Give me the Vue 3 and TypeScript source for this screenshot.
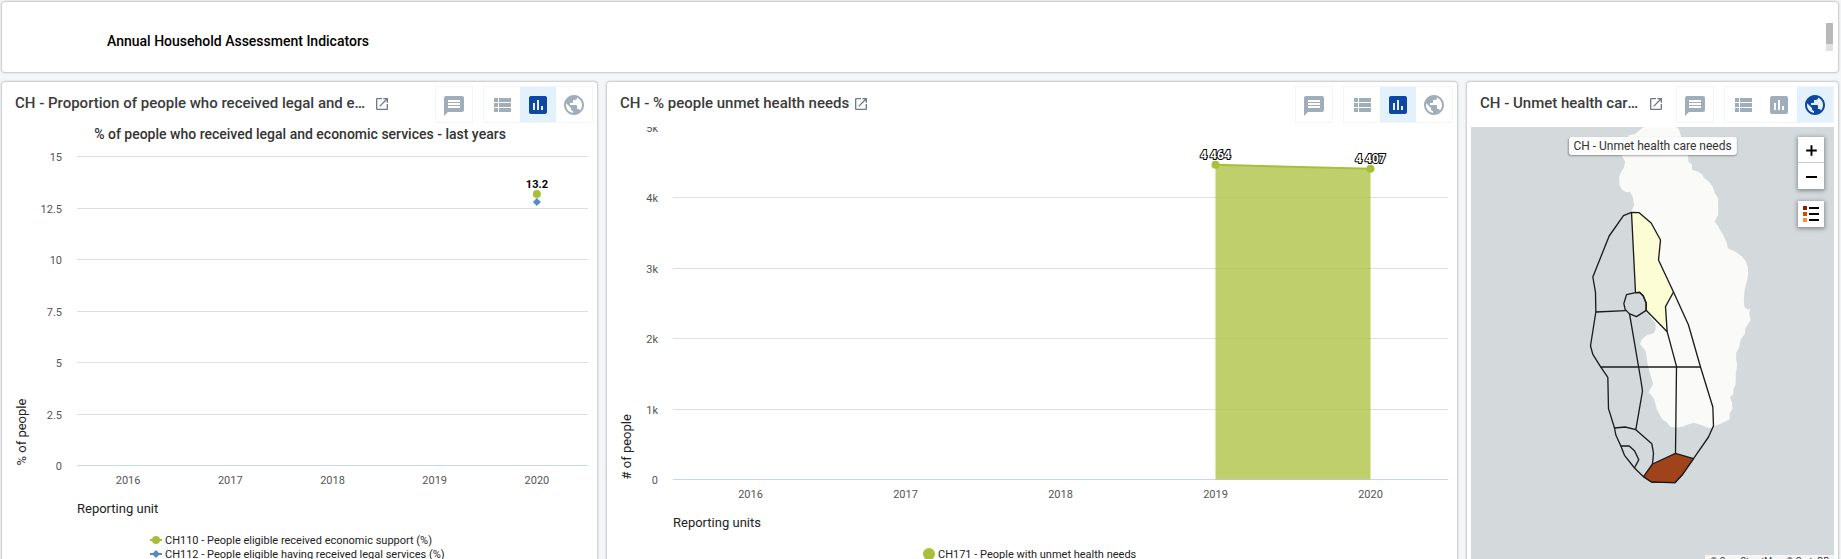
<script setup lang="ts">
import { computed, onBeforeUnmount, onMounted, ref } from 'vue'

type View = 'table' | 'chart' | 'map'

interface Series {
  name: string
  color: string
  marker: 'dot' | 'line-dot' | 'line-diamond'
}

interface Chart {
  title?: string
  left: number
  top: number
  step: number
  ticks: string[]
  xTitle: string
  yTitle: string
  legendX: number
  legendY: number
  legend: Series[]
}

interface Card {
  id: string
  title: string
  view: View
  roomy?: boolean
  chart?: Chart
}

const years = ['2016', '2017', '2018', '2019', '2020']
const green = '#a8bf3a'
const blue = '#558cc0'
const rightPad = 5

const cards: Card[] = [
  {
    id: 'legal',
    title: 'CH - Proportion of people who received legal and economic services',
    view: 'chart',
    roomy: true,
    chart: {
      title: '% of people who received legal and economic services - last years',
      left: 71,
      top: 29.5,
      step: 51.5,
      ticks: ['15', '12.5', '10', '7.5', '5', '2.5', '0'],
      xTitle: 'Reporting unit',
      yTitle: '% of people',
      legendX: -149,
      legendY: 413,
      legend: [
        { name: 'CH110 - People eligible received economic support (%)', color: green, marker: 'line-dot' },
        { name: 'CH112 - People eligible having received legal services (%)', color: blue, marker: 'line-diamond' },
      ],
    },
  },
  {
    id: 'health',
    title: 'CH - % people unmet health needs',
    view: 'chart',
    chart: {
      left: 62,
      top: 0,
      step: 70.5,
      ticks: ['5k', '4k', '3k', '2k', '1k', '0'],
      xTitle: 'Reporting units',
      yTitle: '# of people',
      legendX: -108,
      legendY: 427,
      legend: [{ name: 'CH171 - People with unmet health needs', color: green, marker: 'dot' }],
    },
  },
  { id: 'map', title: 'CH - Unmet health care needs', view: 'map' },
]

const views: { id: View; label: string; path: string }[] = [
  {
    id: 'table',
    label: 'View as table',
    path: 'M4 14h4v-4H4v4zm0 5h4v-4H4v4zM4 9h4V5H4v4zm5 5h12v-4H9v4zm0 5h12v-4H9v4zM9 5v4h12V5H9z',
  },
  {
    id: 'chart',
    label: 'View as chart',
    path: 'M19 3H5c-1.1 0-2 .9-2 2v14c0 1.1.9 2 2 2h14c1.100 0 2-.9 2-2V5c0-1.100-.9-2-2-2zM9 17H7v-7h2v7zm4 0h-2V7h2v10zm4 0h-2v-4h2v4z',
  },
  {
    id: 'map',
    label: 'View as map',
    path: 'M12 2C6.480 2 2 6.480 2 12s4.480 10 10 10 10-4.480 10-10S17.520 2 12 2zm-1 17.930c-3.950-.490-7-3.850-7-7.930 0-.620.080-1.210.210-1.790L9 15v1c0 1.100.900 2 2 2v1.930zm6.900-2.540c-.260-.810-1-1.390-1.900-1.390h-1v-3c0-.550-.450-1-1-1H8v-2h2c.550 0 1-.450 1-1V7h2c1.100 0 2-.900 2-2v-.410c2.930 1.190 5 4.060 5 7.410 0 2.080-.800 3.970-2.100 5.390z',
  },
]

const widths = ref<Record<string, number>>({ legal: 587, health: 842 })
const chartEls: Record<string, HTMLElement> = {}
const keep = (id: string) => (el: unknown) => {
  if (el) chartEls[id] = el as HTMLElement
}

let observer: ResizeObserver | undefined
const measure = () => {
  for (const id of Object.keys(chartEls)) {
    const w = Math.round(chartEls[id].clientWidth)
    if (widths.value[id] !== w) widths.value[id] = w
  }
}
onMounted(() => {
  measure()
  observer = new ResizeObserver(measure)
  Object.values(chartEls).forEach((el) => observer!.observe(el))
})
onBeforeUnmount(() => observer?.disconnect())

const right = (c: Card) => widths.value[c.id] - rightPad
const lineY = (c: Chart, i: number) => Math.floor(c.top + i * c.step) + 0.5
const baseY = (c: Chart) => lineY(c, c.ticks.length - 1)
const yearX = (c: Card, i: number) => c.chart!.left + ((right(c) - c.chart!.left) * (i + 0.5)) / years.length
const legendStart = (c: Card) => Math.round(widths.value[c.id] / 2) + c.chart!.legendX

const area = computed(() => {
  const card = cards[1]
  const base = baseY(card.chart!)
  const perUnit = card.chart!.step / 1000
  return {
    base,
    points: [
      { x: yearX(card, 3), y: base - 4464 * perUnit, label: '4 464' },
      { x: yearX(card, 4), y: base - 4407 * perUnit, label: '4 407' },
    ],
  }
})
const areaPath = computed(() => {
  const [a, b] = area.value.points
  return `M${a.x} ${area.value.base}V${a.y}L${b.x} ${b.y}V${area.value.base}Z`
})
const areaLine = computed(() => {
  const [a, b] = area.value.points
  return `M${a.x} ${a.y}L${b.x} ${b.y}`
})

const borders = [
  'M483 256 459 266 416 327 367 450 375 496 376 555 360 657 367 682 390 719 412 751 414 845 432 903 436 924 451 957 462 985 492 1023 519 1049 543 1065 613 1067 634 1045 669 995 714 930 729 896 727 840 690 720 654 594 609 495',
  'M376 555 466 551',
  'M390 720H690',
  'M477 560 511 759 516 792 496 908',
  'M590 614 618 718 615 979',
  'M432 903 464 900 496 908 544 950 549 979 546 1011',
  'M451 957H476L492 971 505 998 492 1023',
  'M468 503 495 497 507 496 518 506 527 528V550L498 569 476 560 464 547 460 530Z',
]
</script>

<template>
  <main class="page">
    <section class="card banner">
      <h1 class="banner-text">Annual Household Assessment Indicators</h1>
      <div class="scrollbar" aria-hidden="true"><div class="thumb"></div></div>
    </section>

    <div class="board">
      <section v-for="card in cards" :key="card.id" class="card item">
        <header class="header">
          <div class="heading" :class="{ roomy: card.roomy }">
            <h2 class="title">{{ card.title }}</h2>
            <a class="launch" href="#" aria-label="Open in app">
              <svg viewBox="0 0 24 24" width="16" height="16">
                <path d="M19 19H5V5h7V3H5c-1.110 0-2 .9-2 2v14c0 1.100.89 2 2 2h14c1.100 0 2-.9 2-2v-7h-2v7zM14 3v2h3.590l-9.830 9.830 1.410 1.410L19 6.410V10h2V3h-7z" />
              </svg>
            </a>
          </div>
          <div class="group">
            <button type="button" class="tool comment" aria-label="Show details and interpretations">
              <svg viewBox="0 0 24 24" width="24" height="24">
                <path d="M20 2H4c-1.100 0-1.990.9-1.990 2L2 22l4-4h14c1.100 0 2-.9 2-2V4c0-1.100-.9-2-2-2zm-2 12H6v-2h12v2zm0-3H6V9h12v2zm0-3H6V6h12v2z" />
              </svg>
            </button>
          </div>
          <div class="group">
            <button
              v-for="v in views"
              :key="v.id"
              type="button"
              class="tool"
              :class="{ active: v.id === card.view }"
              :aria-label="v.label"
              :aria-pressed="v.id === card.view"
            >
              <svg viewBox="0 0 24 24" width="24" height="24"><path :d="v.path" /></svg>
            </button>
          </div>
        </header>

        <div v-if="card.chart" class="content" :ref="keep(card.id)">
          <svg class="chart" :width="widths[card.id]" height="448">
            <text v-if="card.chart.title" class="chart-title" :x="Math.round(widths[card.id] / 2)" y="12">
              {{ card.chart.title }}
            </text>
            <g v-for="(t, i) in card.chart.ticks" :key="t">
              <path
                v-if="i > 0 || card.chart.top > 0"
                :class="i === card.chart.ticks.length - 1 ? 'axis' : 'grid'"
                :d="`M${card.chart.left} ${lineY(card.chart, i)}H${right(card)}`"
              />
              <text class="tick end" :x="card.chart.left - 15" :y="lineY(card.chart, i) + 4">{{ t }}</text>
            </g>
            <text v-for="(y, i) in years" :key="y" class="tick" :x="yearX(card, i)" :y="baseY(card.chart) + 18">
              {{ y }}
            </text>
            <text class="axis-title" :x="card.chart.left" :y="baseY(card.chart) + 47">{{ card.chart.xTitle }}</text>
            <text
              class="axis-title side"
              :transform="`translate(20 ${baseY(card.chart)}) rotate(-90)`"
            >{{ card.chart.yTitle }}</text>

            <g v-if="card.id === 'legal'">
              <path :fill="blue" :d="`M${yearX(card, 4)} 71l4 4-4 4-4-4z`" />
              <circle :fill="green" :cx="yearX(card, 4)" cy="67" r="4" />
              <text class="value" :x="yearX(card, 4)" y="61">13.2</text>
            </g>
            <g v-else>
              <path :fill="green" fill-opacity="0.75" :d="areaPath" />
              <path :stroke="green" stroke-width="2" :d="areaLine" />
              <g v-for="p in area.points" :key="p.label">
                <circle :fill="green" :cx="p.x" :cy="p.y" r="4" />
                <text class="value outlined" :x="p.x" :y="p.y - 6">{{ p.label }}</text>
              </g>
            </g>

            <g
              v-for="(s, i) in card.chart.legend"
              :key="s.name"
              :transform="`translate(${legendStart(card)} ${card.chart.legendY + i * 14})`"
            >
              <path v-if="s.marker !== 'dot'" :stroke="s.color" stroke-width="2" d="M-1 0H11" />
              <circle v-if="s.marker === 'line-dot'" :fill="s.color" cx="5" cy="0" r="4" />
              <path v-else-if="s.marker === 'line-diamond'" :fill="s.color" d="M5-4l4 4-4 4-4-4z" />
              <circle v-else :fill="s.color" cx="5" cy="0" r="6" />
              <text class="legend" x="14" y="4">{{ s.name }}</text>
            </g>
          </svg>
        </div>

        <div v-else class="content map">
          <svg class="terrain" viewBox="0 0 1092 1320" preserveAspectRatio="xMidYMin slice">
            <path
              class="land"
              d="M520 0 507 10 492 22 475 25 470 36 458 60 453 84 464 104 460 122 450 138 446 149 447 174 455 188 465 195 479 196 487 210 491 234 482 254 510 300 535 360 548 430 545 500 530 545 537 566 555 589 556 604 550 619 530 624 515 636 508 651 518 662 526 674 532 714 540 744 548 771 534 796 550 814 555 832 560 849 568 864 575 877 587 884 600 899 618 902 635 899 650 893 670 887 690 893 712 902 722 903 732 897 750 890 778 877 777 860 786 845 784 826 778 811 788 802 789 785 795 774 796 740 800 714 797 699 797 678 806 662 810 639 823 620 825 604 833 590 841 579 836 560 840 544 834 548 822 541 820 520 822 490 830 459 833 440 832 419 825 401 815 389 795 374 772 364 768 345 758 324 748 308 742 295 732 284 743 264 743 214 734 200 726 178 715 164 700 152 695 142 680 133 665 129 664 112 654 104 652 84 640 50 630 24 626 8 618 0Z"
            />
            <path
              class="region low"
              d="M483 256 506 257 542 288 570 339 564 399 609 495 585 539 590 614 527 550V528L518 506 507 496 495 497Z"
            />
            <path v-for="b in borders" :key="b" class="border" :d="b" />
            <path class="region high" d="M615 979 669 995 634 1045 613 1067 543 1065 519 1049 546 1011Z" />
          </svg>
          <div class="map-name">CH - Unmet health care needs</div>
          <div class="controls">
            <div class="control">
              <button type="button" class="map-button" aria-label="Zoom in">
                <svg viewBox="0 0 26 26" width="26" height="25"><path class="glyph" d="M8 14H19M13.500 8.500V19.500" /></svg>
              </button>
              <button type="button" class="map-button" aria-label="Zoom out">
                <svg viewBox="0 0 26 26" width="26" height="26"><path class="glyph" d="M8 14H19" /></svg>
              </button>
            </div>
            <div class="control">
              <button type="button" class="map-button" aria-label="Legend">
                <svg viewBox="0 0 26 26" width="26" height="26">
                  <path fill="#7f2704" d="M5 5h4v4H5z" />
                  <path fill="#d94801" d="M5 11h4v4H5z" />
                  <path fill="#fd8d3c" d="M5 17h4v4H5z" />
                  <path class="glyph" d="M11 7H21M11 13H21M11 19H21" />
                </svg>
              </button>
            </div>
          </div>
          <div class="attribution">© OpenStreetMap, © CartoDB</div>
        </div>
      </section>
    </div>
  </main>
</template>

<style>
html,
body {
  margin: 0;
}
</style>

<style scoped>
.page {
  box-sizing: border-box;
  height: 100vh;
  overflow: hidden;
  padding: 2px;
  background: #f4f6f8;
  color: #212934;
  font-family: Roboto, "Liberation Sans", sans-serif;
}
.card {
  background: #fff;
  border-radius: 3px;
  box-shadow: 0 0 2px 1px rgba(0, 0, 0, 0.2);
}
.banner {
  display: flex;
  align-items: center;
  justify-content: space-between;
  height: 70px;
  margin: 0 1px 10px 0;
  padding: 0 5px 0 105px;
  box-sizing: border-box;
}
.banner-text {
  margin: 0;
  padding-top: 8px;
  font-size: 14px;
  font-weight: 500;
  line-height: 20px;
  color: #000;
}
.scrollbar {
  width: 7px;
  height: 28px;
  background: #e1e1e1;
}
.thumb {
  height: 21px;
  background: #b9b9b9;
}
.board {
  display: grid;
  grid-template-columns: 595fr 850fr 371fr;
  gap: 10px;
  margin-right: 1px;
}
.item {
  min-width: 0;
  padding: 4px 4px 8px;
}
.header {
  display: flex;
  gap: 10px;
  margin-bottom: 4px;
}
.heading {
  flex: 1;
  min-width: 0;
  display: flex;
  align-items: center;
  gap: 4px;
  height: 36px;
  padding: 0 2px 0 9px;
}
.heading.roomy {
  padding-right: 35px;
}
.title {
  margin: 0;
  min-width: 0;
  padding-bottom: 2px;
  overflow: hidden;
  text-overflow: ellipsis;
  white-space: nowrap;
  font-size: 15px;
  font-weight: 500;
  line-height: 24px;
  color: #3b3b3b;
}
.launch {
  flex: none;
  height: 16px;
  fill: #6e7a8a;
}
.launch svg,
.tool svg,
.map-button svg,
.terrain,
.chart {
  display: block;
}
.group {
  flex: none;
  display: flex;
  border: 1px solid #f3f5f7;
}
.tool {
  width: 36px;
  height: 35px;
  padding: 5px 6px;
  border: 0;
  background: none;
  fill: #a0adba;
  cursor: pointer;
}
.tool.comment {
  padding-top: 7px;
  padding-bottom: 4px;
}
.tool.active {
  background: #e3f1fd;
  fill: #0d47a1;
}
.content {
  height: 448px;
  overflow: hidden;
}
.grid {
  stroke: #dedede;
}
.axis {
  stroke: #ccd6eb;
}
.chart-title {
  font-size: 14px;
  font-weight: 500;
  text-anchor: middle;
  fill: #333;
}
.tick {
  font-size: 11px;
  text-anchor: middle;
  fill: #555;
}
.tick.end {
  text-anchor: end;
}
.axis-title {
  font-size: 13px;
  fill: #222;
}
.value {
  font-size: 11px;
  font-weight: 700;
  text-anchor: middle;
  fill: #000;
  stroke: #fff;
  stroke-width: 2px;
  paint-order: stroke;
}
.value.outlined {
  font-size: 12px;
  fill: #fff;
  stroke: #000;
}
.legend {
  font-size: 11px;
  fill: #222;
}
.map {
  position: relative;
  height: 440px;
  background: #d4dadc;
}
.terrain {
  width: 100%;
  height: 100%;
}
.land {
  fill: #fafaf8;
}
.border,
.region {
  stroke: #1b1b1b;
  stroke-width: 4;
  stroke-linejoin: round;
}
.border {
  fill: none;
}
.low {
  fill: #fdfdd5;
}
.high {
  fill: #a0431b;
}
.map-name {
  position: absolute;
  top: 10px;
  left: 50%;
  transform: translateX(-50%);
  padding: 0 5px;
  border-radius: 3px;
  background: #fcfcfc;
  box-shadow: 0 1px 2px 0 rgba(0, 0, 0, 0.35);
  font-size: 12px;
  line-height: 18px;
  white-space: nowrap;
  color: #333;
}
.controls {
  position: absolute;
  top: 10px;
  right: 10px;
  display: grid;
  gap: 12px;
}
.control {
  background: #fff;
  box-shadow: 0 1px 4px 1px rgba(0, 0, 0, 0.35);
}
.map-button {
  display: block;
  padding: 0;
  border: 0;
  background: #fff;
  cursor: pointer;
}
.map-button + .map-button {
  border-top: 1px solid #ccc;
}
.glyph {
  fill: none;
  stroke: #000;
  stroke-width: 2;
}
.attribution {
  position: absolute;
  right: 0;
  bottom: 0;
  padding: 0 5px;
  background: rgba(255, 255, 255, 0.75);
  font-size: 9px;
  line-height: 12px;
  color: #333;
}
</style>
